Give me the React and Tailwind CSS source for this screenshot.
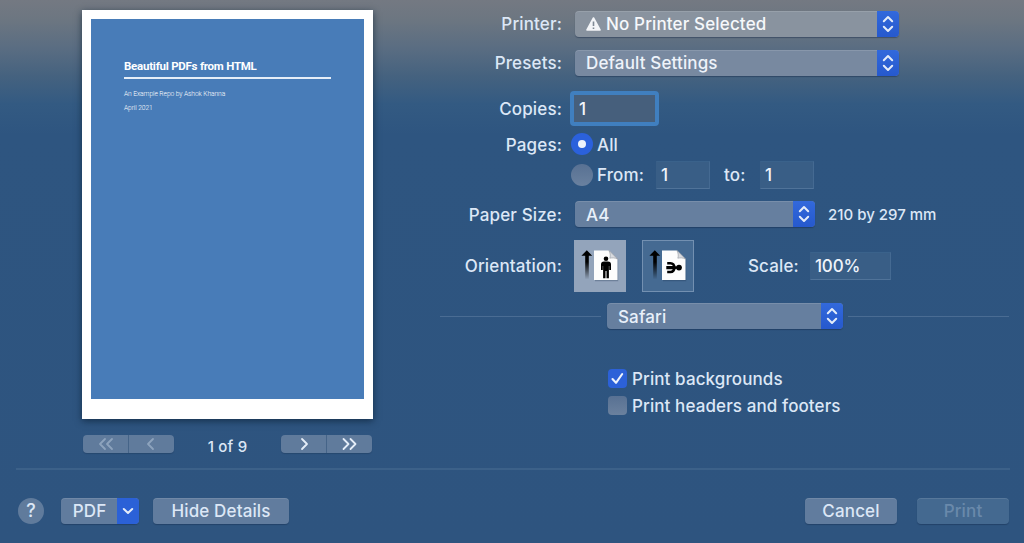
import React from 'react';

const Chevrons = ({ className = '' }) => (
  <span className={`flex h-[26px] w-[22px] shrink-0 items-center justify-center rounded-r-[4px] bg-gradient-to-b from-[#3269dc] to-[#2659cd] ${className}`}>
    <svg width="12" height="18" viewBox="0 0 12 18" fill="none" stroke="#e4ecf9" strokeWidth="2" strokeLinecap="round" strokeLinejoin="round">
      <path d="M1.8 6.2 6 2l4.2 4.2M1.8 11.8 6 16l4.2-4.2" />
    </svg>
  </span>
);

const Popup = ({ className, children }) => (
  <div className={`flex h-[26px] shrink-0 items-center justify-between rounded-[4px] shadow-[0_1px_1px_rgba(15,35,65,0.4),inset_0_1px_0_rgba(255,255,255,0.12)] ${className}`}>
    <span className="flex items-center pl-[11px]">{children}</span>
    <Chevrons />
  </div>
);

const Row = ({ label, className, children }) => (
  <div className={`flex items-center ${className}`}>
    <span className="w-[122px] shrink-0 text-right">{label}</span>
    {children}
  </div>
);

const Field = ({ className, children }) => (
  <span className={`flex shrink-0 items-center border border-t-[#3c658f]/50 border-r-[#456a92] border-b-[#507399] border-l-transparent bg-[#395e86] pl-[4px] text-[#eef3fa] ${className}`}>
    {children}
  </span>
);

const Sheet = ({ landscape }) => (
  <svg width="50" height="50" viewBox="0 0 50 50">
    <defs>
      <linearGradient id="shaft" x1="0" y1="0" x2="0" y2="1">
        <stop offset="0.4" stopColor="#000" />
        <stop offset="1" stopColor="#000" stopOpacity="0" />
      </linearGradient>
    </defs>
    <path d="M11.8 9.3 17.2 14.8H13.8V38.5H10.2V14.8H6.4Z" fill="url(#shaft)" />
    <path d="M20 10.5H34.5L43.2 18.5V40.2H20Z" fill="#1b3150" opacity="0.3" />
    <path d="M19 9.5H34L42.5 18V39H19Z" fill="#fdfdfd" />
    <path d="M34 9.5C35.5 13 35.5 15 34.8 17.2C37.5 16.6 40 16.8 42.5 18Z" fill="#d8dade" stroke="#8e949c" strokeWidth="0.6" />
    {landscape ? (
      <g>
        <circle cx="36" cy="26.6" r="2.9" />
        <path d="M24.2 22.2H27.4Q31.2 22.4 31.4 26.6Q31.2 30.8 27.4 31H24.2" fill="none" stroke="#000" strokeWidth="2.6" />
        <path d="M23.3 24.9H30V24L33 25.4H35V27.8H33L30 29.2V28.3H23.3Z" />
      </g>
    ) : (
      <g>
        <circle cx="31" cy="17.8" r="2.3" />
        <path d="M29 20.4H33C35 20.4 36 21.6 36 23.2V29H34.2V25H33.9V37.2H31.5V30H30.5V37.2H28.1V25H27.8V29H26V23.2C26 21.6 27 20.4 29 20.4Z" />
      </g>
    )}
  </svg>
);

const Segments = ({ first, second, color }) => (
  <div className="flex h-[18px] w-[91px] overflow-hidden rounded-[4px] bg-[#607b9c] shadow-[0_1px_1px_rgba(15,35,65,0.25)]">
    {[first, second].map((d, i) => (
      <span key={i} className={`flex flex-1 items-center justify-center ${i ? 'border-l border-[#456488]' : ''}`}>
        <svg width="18" height="14" viewBox="0 0 18 14" fill="none" stroke={color} strokeWidth="1.8" strokeLinecap="round" strokeLinejoin="round">
          <path d={d} />
        </svg>
      </span>
    ))}
  </div>
);

const button = 'flex h-[26px] items-center justify-center rounded-[4px] shadow-[0_1px_1px_rgba(15,35,65,0.35),inset_0_1px_0_rgba(255,255,255,0.1)]';

export default function App() {
  return (
    <div className="flex h-[543px] w-[1024px] flex-col overflow-hidden bg-[linear-gradient(180deg,#747982_0px,#6c7681_20px,#5a6d82_48px,#45627f_76px,#335a82_104px,#2e5580_135px,#2e547f_543px)] font-[Inter,'Liberation_Sans',sans-serif] text-[17px] leading-[22px] font-medium tracking-[0.14px] whitespace-nowrap text-[#dce7f6]">
      <main className="flex h-[468px] shrink-0">
        <section className="w-[440px] shrink-0 pt-[10px] pl-[82px]">
          <div className="h-[409px] w-[291px] bg-white px-[9px] pt-[9px] shadow-[0_2px_7px_rgba(8,28,48,0.65)]">
            <div className="h-[380px] bg-[#487cb8] px-[33px] pt-[38px] font-[family-name:Roboto,sans-serif] text-white">
              <h1 className="h-[22px] w-[207px] border-b-2 border-[#e6eef8] text-[11.5px] leading-[18px] font-bold tracking-[-0.24px]">Beautiful PDFs from HTML</h1>
              <p className="mt-[8px] text-[6.7px] leading-[14px] font-light tracking-[-0.09px]">An Example Repo by Ashok Khanna</p>
              <p className="text-[6.7px] leading-[14px] font-light tracking-[-0.09px]">April 2021</p>
            </div>
          </div>
          <nav className="mt-[16px] ml-[1px] flex w-[289px] items-start justify-between">
            <Segments color="#8da3bd" first="M8 2 3 7l5 5M15 2l-5 5 5 5" second="M10 2 5 7l5 5" />
            <span className="mt-[1px] text-[15px] tracking-[0.2px]">1 of 9</span>
            <Segments color="#e4edf8" first="M7 2l5 5-5 5" second="M2.5 2l5 5-5 5M9.5 2l5 5-5 5" />
          </nav>
        </section>

        <section className="flex w-[584px] flex-col pt-[11px]">
          <Row label="Printer:" className="h-[26px]">
            <Popup className="ml-[13px] w-[324px] bg-[#89939f] text-[#f6f8fb]">
              <svg className="mr-[5px]" width="15" height="14" viewBox="0 0 15 14">
                <path d="M7.5 1 14 13H1Z" fill="#f3f5f8" stroke="#f3f5f8" strokeWidth="1.6" strokeLinejoin="round" />
                <path d="M7.5 4.6V9M7.5 10.5v1.5" stroke="#7f8995" strokeWidth="1.6" />
              </svg>
              No Printer Selected
            </Popup>
          </Row>
          <Row label="Presets:" className="mt-[13px] h-[26px]">
            <Popup className="ml-[13px] w-[324px] bg-[#7889a0] text-[#eef3fa]">Default Settings</Popup>
          </Row>
          <Row label="Copies:" className="mt-[15px] h-[35px]">
            <span className="ml-[8px] flex h-[35px] w-[89px] items-center rounded-[4px] border-4 border-[#407fbf] bg-[#465f7c] pl-[5px] text-[#f2f5fa]">1</span>
          </Row>
          <Row label={<span className="block pt-[2px]">Pages:</span>} className="mt-[7px] h-[22px]">
            <span className="mr-[4px] ml-[9px] flex h-[22px] w-[22px] items-center justify-center rounded-full bg-[#2b61dc]">
              <i className="h-[8px] w-[8px] rounded-full bg-[#eef3fc]" />
            </span>
            <span className="pt-[2px]">All</span>
          </Row>
          <Row label="" className="mt-[6px] h-[28px]">
            <span className="mr-[4px] ml-[9px] h-[22px] w-[22px] rounded-full bg-gradient-to-b from-[#587193] to-[#6a819f]" />
            <span className="w-[59px]">From:</span>
            <Field className="h-[28px] w-[54px]">1</Field>
            <span className="ml-[14px] w-[36px]">to:</span>
            <Field className="h-[28px] w-[54px]">1</Field>
          </Row>
          <Row label={<span className="block pt-[2px]">Paper Size:</span>} className="mt-[12px] h-[26px]">
            <Popup className="ml-[13px] w-[240px] bg-[#667f9f] text-[#e8f0fa]"><span className="pt-[2px]">A4</span></Popup>
            <span className="ml-[13px] pt-[2px] text-[15px] tracking-[0px]">210 by 297 mm</span>
          </Row>
          <Row label="Orientation:" className="mt-[13px] h-[52px]">
            <span className="ml-[12px] flex h-[52px] w-[52px] items-center justify-center bg-[#93a4bb]"><Sheet /></span>
            <span className="ml-[16px] flex h-[52px] w-[52px] items-center justify-center border border-[#7390b1] bg-[#456a92]"><Sheet landscape /></span>
            <span className="ml-[54px] w-[62px]">Scale:</span>
            <Field className="h-[28px] w-[81px]"><span className="tracking-[-0.2px]">100%</span></Field>
          </Row>
          <div className="mt-[11px] flex h-[26px] items-center">
            <i className="h-px w-[161px] bg-[#4a6c93]" />
            <Popup className="mr-[5px] ml-[6px] w-[236px] bg-[#667f9f] text-[#e8f0fa]"><span className="pt-[2px]">Safari</span></Popup>
            <i className="h-px w-[161px] bg-[#4a6c93]" />
          </div>
          <div className="mt-[40px] ml-[168px] flex h-[19px] items-center gap-[5px]">
            <span className="flex h-[19px] w-[19px] items-center justify-center rounded-[4px] bg-[#2c61d8]">
              <svg width="15" height="15" viewBox="0 0 15 15" fill="none" stroke="#eef3fc" strokeWidth="2.1" strokeLinecap="round" strokeLinejoin="round">
                <path d="M2.5 8 6 11.8 12.2 3" />
              </svg>
            </span>
            <span className="tracking-[0.1px]">Print backgrounds</span>
          </div>
          <div className="mt-[8px] ml-[168px] flex h-[19px] items-center gap-[5px]">
            <span className="h-[19px] w-[19px] rounded-[4px] bg-gradient-to-b from-[#587193] to-[#6b819e]" />
            <span className="tracking-[0.1px]">Print headers and footers</span>
          </div>
        </section>
      </main>

      <footer className="mr-[14px] ml-[16px] flex items-start border-t-2 border-[#3c6189] pt-[28px]">
        <button className="ml-[2px] h-[26px] w-[26px] rounded-full bg-[#607b9c] text-[18px]">?</button>
        <button className={`${button} ml-[17px] w-[78px] bg-[#617c9e]`}>
          <span className="w-[56px] pl-px">PDF</span>
          <span className="flex h-[26px] w-[22px] items-center justify-center rounded-r-[4px] bg-[#2b61d7]">
            <svg width="12" height="8" viewBox="0 0 12 8" fill="none" stroke="#e4ecf9" strokeWidth="2" strokeLinecap="round" strokeLinejoin="round">
              <path d="M1.8 2 6 6l4.2-4" />
            </svg>
          </span>
        </button>
        <button className={`${button} ml-[14px] w-[136px] bg-[#617c9e]`}>Hide Details</button>
        <button className={`${button} ml-auto w-[92px] bg-[#617c9e]`}>Cancel</button>
        <button className={`${button} mr-px ml-[20px] w-[92px] bg-[#446990] text-[#6a89ab]`}>Print</button>
      </footer>
    </div>
  );
}
